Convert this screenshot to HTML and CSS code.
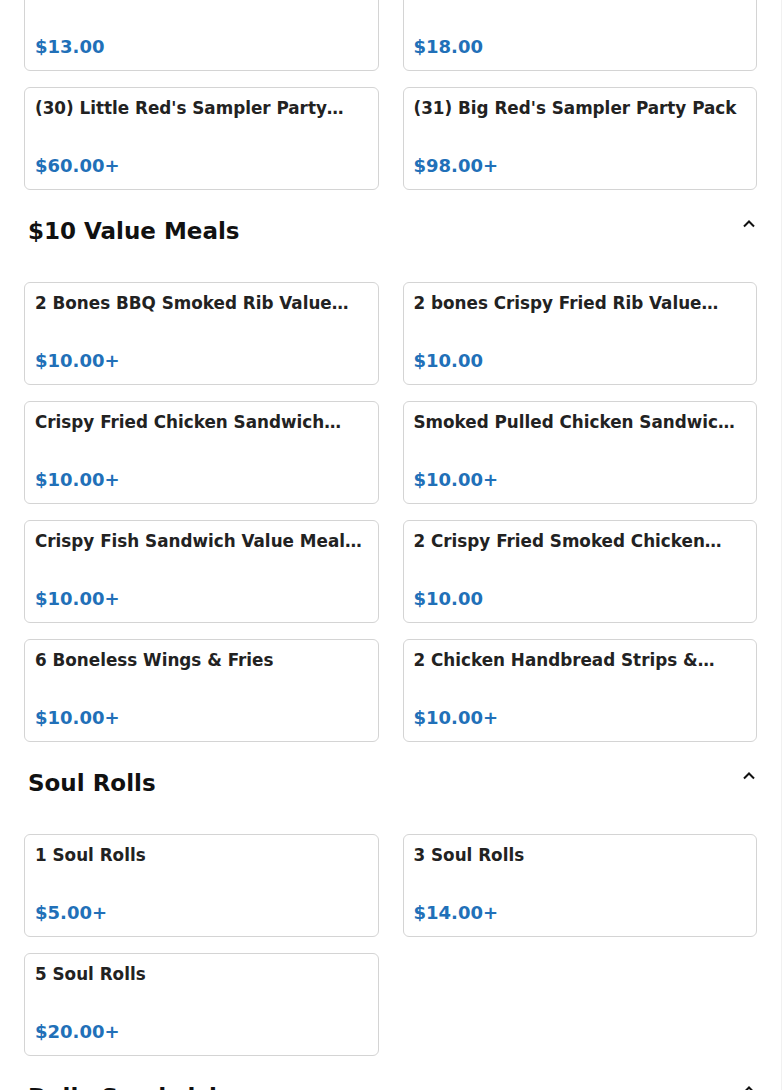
FILE: index.html
```html
<!DOCTYPE html>
<html lang="en">
<head>
    <meta charset="UTF-8">
    <meta name="viewport" content="width=device-width, initial-scale=1.0">
    <title>Menu</title>
    <link rel="stylesheet" href="styles.css">
</head>

<body>
    <div class="menu">
        <!-- Party Packs (scrolled past the top) -->
        <section class="category first">
            <div class="item-grid">
                <div class="item-card">
                    <div class="item-name">(28) Rib Tips Dinner</div>
                    <div class="item-price">$13.00</div>
                </div>
                <div class="item-card">
                    <div class="item-name">(29) Half Slab Dinner</div>
                    <div class="item-price">$18.00</div>
                </div>
                <div class="item-card">
                    <div class="item-name">(30) Little Red's Sampler Party Pack</div>
                    <div class="item-price">$60.00+</div>
                </div>
                <div class="item-card">
                    <div class="item-name">(31) Big Red's Sampler Party Pack</div>
                    <div class="item-price">$98.00+</div>
                </div>
            </div>
        </section>

        <!-- $10 Value Meals -->
        <section class="category">
            <div class="category-header">
                <h2>$10 Value Meals</h2>
                <svg class="chevron" width="14" height="10" viewBox="0 0 14 10"><path d="M2 7.5 L7 2.5 L12 7.5" fill="none" stroke="#111" stroke-width="2"/></svg>
            </div>
            <div class="item-grid">
                <div class="item-card">
                    <div class="item-name">2 Bones BBQ Smoked Rib Value Meal</div>
                    <div class="item-price">$10.00+</div>
                </div>
                <div class="item-card">
                    <div class="item-name">2 bones Crispy Fried Rib Value Meal</div>
                    <div class="item-price">$10.00</div>
                </div>
                <div class="item-card">
                    <div class="item-name">Crispy Fried Chicken Sandwich Value Meal</div>
                    <div class="item-price">$10.00+</div>
                </div>
                <div class="item-card">
                    <div class="item-name">Smoked Pulled Chicken Sandwich Value Meal</div>
                    <div class="item-price">$10.00+</div>
                </div>
                <div class="item-card">
                    <div class="item-name">Crispy Fish Sandwich Value Meal w/ Fries</div>
                    <div class="item-price">$10.00+</div>
                </div>
                <div class="item-card">
                    <div class="item-name">2 Crispy Fried Smoked Chicken Wings Value Meal</div>
                    <div class="item-price">$10.00</div>
                </div>
                <div class="item-card">
                    <div class="item-name">6 Boneless Wings &amp; Fries</div>
                    <div class="item-price">$10.00+</div>
                </div>
                <div class="item-card">
                    <div class="item-name">2 Chicken Handbread Strips &amp; Fries</div>
                    <div class="item-price">$10.00+</div>
                </div>
            </div>
        </section>

        <!-- Soul Rolls -->
        <section class="category">
            <div class="category-header">
                <h2>Soul Rolls</h2>
                <svg class="chevron" width="14" height="10" viewBox="0 0 14 10"><path d="M2 7.5 L7 2.5 L12 7.5" fill="none" stroke="#111" stroke-width="2"/></svg>
            </div>
            <div class="item-grid">
                <div class="item-card">
                    <div class="item-name">1 Soul Rolls</div>
                    <div class="item-price">$5.00+</div>
                </div>
                <div class="item-card">
                    <div class="item-name">3 Soul Rolls</div>
                    <div class="item-price">$14.00+</div>
                </div>
                <div class="item-card">
                    <div class="item-name">5 Soul Rolls</div>
                    <div class="item-price">$20.00+</div>
                </div>
            </div>
        </section>

        <!-- Daily Sandwiches -->
        <section class="category">
            <div class="category-header">
                <h2>Daily Sandwiches</h2>
                <svg class="chevron" width="14" height="10" viewBox="0 0 14 10"><path d="M2 7.5 L7 2.5 L12 7.5" fill="none" stroke="#111" stroke-width="2"/></svg>
            </div>
            <div class="item-grid">
                <div class="item-card">
                    <div class="item-name">Smoked Brisket Sandwich</div>
                    <div class="item-price">$12.00+</div>
                </div>
            </div>
        </section>
    </div>
</body>
</html>
```

FILE: styles.css
```css
/* General */
body {
    margin: 0;
    padding: 0;
    background-color: #fff;
    font-family: "DejaVu Sans", Verdana, sans-serif;
    color: #222;
    overflow: hidden;
}

.menu {
    width: 733px;
    padding: 0 24px;
    border-right: 1px solid #f1f1f1;
    margin-top: -32px;
}

/* Category */
.category {
    margin-top: 27px;
}

.category.first {
    margin-top: 0;
}

.category-header {
    display: flex;
    justify-content: space-between;
    align-items: flex-start;
    padding-left: 4px;
    margin-bottom: 36px;
}

.category-header h2 {
    margin: 0;
    font-size: 23px;
    line-height: 29px;
    font-weight: bold;
    color: #111;
}

.chevron {
    margin-top: 2px;
    margin-right: 1px;
}

/* Item cards */
.item-grid {
    display: grid;
    grid-template-columns: 1fr 1fr;
    gap: 16px 24px;
}

.item-card {
    box-sizing: border-box;
    height: 103px;
    display: flex;
    flex-direction: column;
    justify-content: space-between;
    padding: 10px 10px 13px;
    border: 1px solid #d4d4d4;
    border-radius: 6px;
    min-width: 0;
}

.item-name {
    font-size: 16.8px;
    line-height: 20px;
    max-height: 20px;
    font-weight: bold;
    color: #222;
    display: -webkit-box;
    -webkit-line-clamp: 1;
    -webkit-box-orient: vertical;
    overflow: hidden;
}

.item-price {
    font-size: 18px;
    font-weight: bold;
    color: #2170b8;
}
```
